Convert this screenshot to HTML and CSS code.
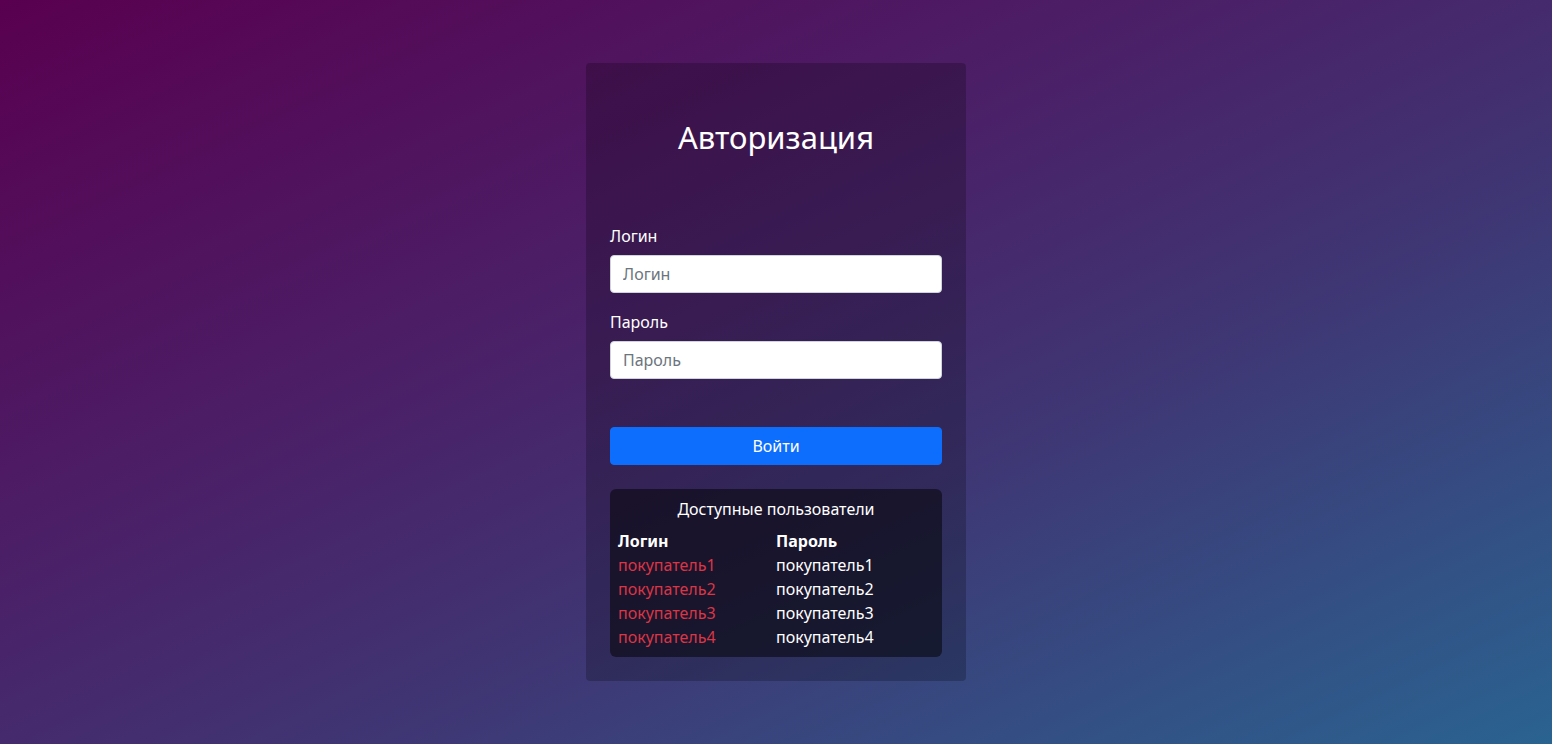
FILE: index.html
```html
<!DOCTYPE html>
<html lang="ru">
<head>
<meta charset="utf-8">
<title>Авторизация</title>
<link rel="stylesheet" href="styles.css">
</head>
<body>
<main class="page">
  <section class="card">
    <h2 class="title">Авторизация</h2>
    <form class="form">
      <label class="label" for="login">Логин</label>
      <input class="input" id="login" type="text" placeholder="Логин">
      <label class="label label-second" for="pass">Пароль</label>
      <input class="input" id="pass" type="password" placeholder="Пароль">
      <button class="btn" type="button">Войти</button>
    </form>
    <div class="users">
      <div class="users-title">Доступные пользователи</div>
      <div class="users-grid">
        <div class="head">Логин</div><div class="head">Пароль</div>
        <div class="login">покупатель1</div><div class="pass">покупатель1</div>
        <div class="login">покупатель2</div><div class="pass">покупатель2</div>
        <div class="login">покупатель3</div><div class="pass">покупатель3</div>
        <div class="login">покупатель4</div><div class="pass">покупатель4</div>
      </div>
    </div>
  </section>
</main>
</body>
</html>
```
FILE: styles.css
```css
* { box-sizing: border-box; }
html, body { margin: 0; height: 100%; }
body {
  font-family: "Noto Sans", "Open Sans", sans-serif;
  font-size: 16px;
  line-height: 1.5;
  color: #fff;
  background: linear-gradient(to bottom right, #590050 0%, #4a2168 40%, #3f3674 62%, #2a6390 100%);
  background-attachment: fixed;
}
.page {
  min-height: 100vh;
  display: flex;
  align-items: center;
  justify-content: center;
}
.card {
  width: 380px;
  padding: 24px;
  background: rgba(0, 0, 0, 0.22);
  border-radius: 4px;
}
.title {
  margin: 31px 0 68px;
  text-align: center;
  font-size: 31px;
  font-weight: 400;
  line-height: 38px;
}
.form { display: flex; flex-direction: column; }
.label { display: block; margin-bottom: 7px; }
.label-second { margin-top: 17px; }
.input {
  height: 38px;
  padding: 6px 12px;
  font: inherit;
  color: #212529;
  background: #fff;
  border: 1px solid #ced4da;
  border-radius: 4px;
}
.input::placeholder { color: #6c757d; }
.btn {
  margin-top: 48px;
  height: 38px;
  font: inherit;
  color: #fff;
  background: #0d6efd;
  border: 1px solid #0d6efd;
  border-radius: 4px;
}
.users {
  margin-top: 24px;
  padding: 8px;
  background: rgba(0, 0, 0, 0.5);
  border-radius: 6px;
}
.users-title { text-align: center; margin-bottom: 8px; }
.users-grid {
  display: grid;
  grid-template-columns: 1fr 1fr;
}
.head { font-weight: 700; }
.login { color: #dc3545; }
```
